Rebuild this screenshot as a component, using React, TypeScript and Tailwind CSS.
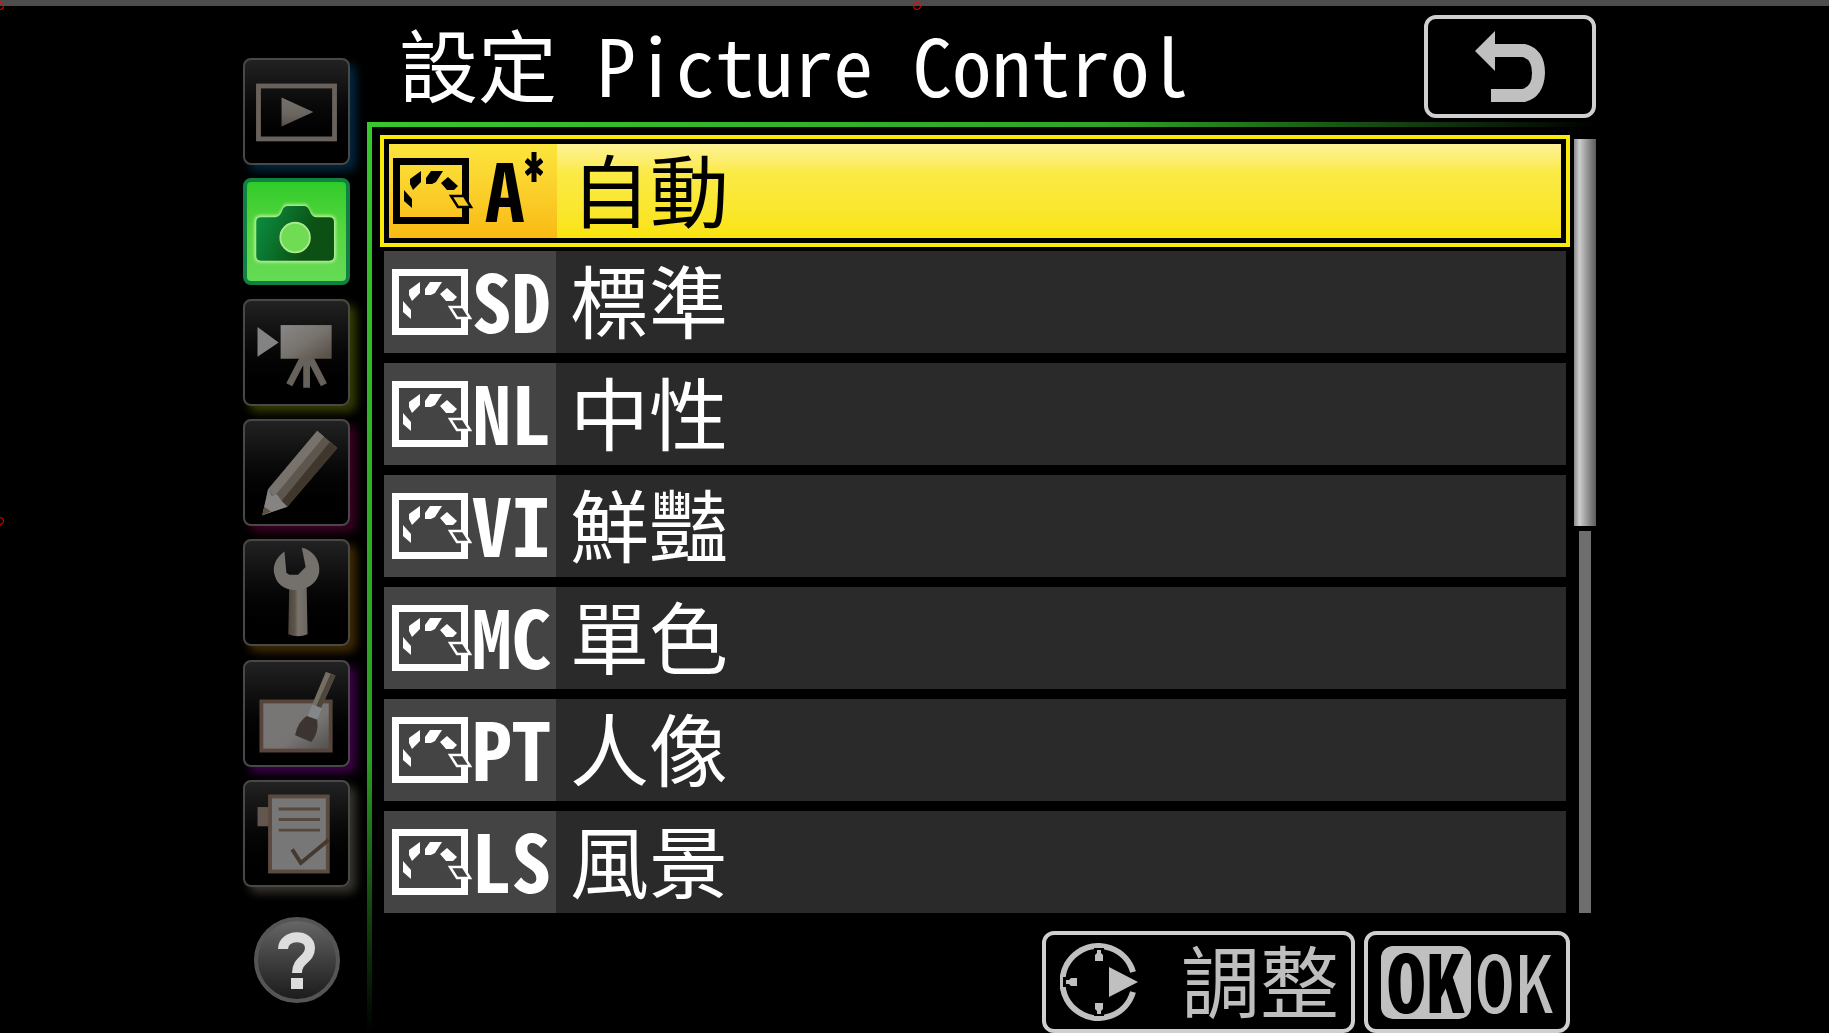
import type { ReactNode } from "react";

const ART = "absolute inset-0 h-full w-full";

function PlayIcon() {
  return (
    <svg viewBox="0 0 107 107" className={ART}>
      <defs>
        <linearGradient id="play" x1="0" y1="0" x2="0" y2="1">
          <stop offset="0" stopColor="#77716d" />
          <stop offset="0.55" stopColor="#6c6661" />
          <stop offset="1" stopColor="#594f49" />
        </linearGradient>
      </defs>
      <rect x="14" y="27" width="79" height="55" fill="none" stroke="#69625c" strokeWidth="5" />
      <path d="M38 39 L71 54 L38 69 Z" fill="url(#play)" />
    </svg>
  );
}

function CameraIcon() {
  return (
    <svg viewBox="0 0 107 107" className={ART}>
      <defs>
        <linearGradient id="cam" x1="0" y1="0" x2="1" y2="0.3">
          <stop offset="0" stopColor="#0a9344" />
          <stop offset="0.8" stopColor="#0c5013" />
        </linearGradient>
        <filter id="camGlow" x="-20%" y="-20%" width="140%" height="140%">
          <feGaussianBlur stdDeviation="2" />
        </filter>
      </defs>
      <path
        d="M15 38 H35 L42 26 H63 L70 38 H89 Q94 38 94 43 V80 Q94 85 89 85 H15 Q10 85 10 80 V43 Q10 38 15 38 Z"
        fill="#b8f29a"
        stroke="#b8f29a"
        strokeWidth="4"
        filter="url(#camGlow)"
      />
      <path
        d="M15 38 H31 Q36 37 38 31 Q40 26 44 26 H62 Q66 26 69 34 Q71 38 75 38 H89 Q94 38 94 43 V80 Q94 85 89 85 H15 Q10 85 10 80 V43 Q10 38 15 38 Z"
        fill="url(#cam)"
      />
      <circle cx="52" cy="60" r="16" fill="#6fdc53" stroke="#a9e88c" strokeWidth="2" />
    </svg>
  );
}

function MovieIcon() {
  return (
    <svg viewBox="0 0 107 107" className={ART}>
      <defs>
        <linearGradient id="movie" x1="0" y1="0" x2="1" y2="1">
          <stop offset="0" stopColor="#888" />
          <stop offset="0.5" stopColor="#77736e" />
          <stop offset="1" stopColor="#544c42" />
        </linearGradient>
      </defs>
      <path d="M13 27 L35 43 L13 58 Z" fill="#838383" />
      <path d="M61 58 L46 87 M64 58 V90 M67 58 L82 87" stroke="#66615b" strokeWidth="7" />
      <rect x="37" y="25" width="53" height="35" fill="url(#movie)" />
    </svg>
  );
}

function PencilIcon() {
  return (
    <svg viewBox="0 0 107 107" className={ART}>
      <path d="M75 10 L24 71 L18 98 L44 89 L96 28 Z" fill="#5d564e" />
      <path d="M75 10 L24 71 L30 79 L82 16 Z" fill="#77726c" />
      <path d="M88 22 L38 83 L44 89 L96 28 Z" fill="#40372c" />
      <path d="M24 71 L28 78 L33 76 L38 83 L44 89 L18 98 Z" fill="#858483" />
      <path d="M20 89 L27 94 L18 98 Z" fill="#5b4f40" />
    </svg>
  );
}

function WrenchIcon() {
  return (
    <svg viewBox="0 0 107 107" className={ART}>
      <defs>
        <linearGradient id="shaft">
          <stop offset="0" stopColor="#4d453a" />
          <stop offset="0.35" stopColor="#5d564c" />
          <stop offset="0.5" stopColor="#78736d" />
          <stop offset="1" stopColor="#6a655e" />
        </linearGradient>
      </defs>
      <path d="M46 44 H64 L65 97 Q55 101 45 97 Z" fill="url(#shaft)" />
      <path d="M41 11 C31 18 28 28 31 36 C34 47 44 51 54 51 C66 50 75 43 77 33 C79 20 70 9 59 7 L63 27 L55 35 H46 L43 33 Z" fill="#74706b" />
    </svg>
  );
}

function RetouchIcon() {
  return (
    <svg viewBox="0 0 107 107" className={ART}>
      <defs>
        <linearGradient id="canvas" x1="0" y1="0" x2="1" y2="1">
          <stop offset="0" stopColor="#767676" />
          <stop offset="0.6" stopColor="#777573" />
          <stop offset="1" stopColor="#504d4a" />
        </linearGradient>
      </defs>
      <rect x="17" y="41" width="72" height="51" fill="url(#canvas)" stroke="#57453c" strokeWidth="4" />
      <path d="M84 10 L94 14 L78 50 L69 46 Z" fill="#756e65" />
      <path d="M89 12 L94 14 L78 50 L73 48 Z" fill="#4e463a" />
      <path d="M70 44 L80 48 L75 60 L65 56 Z" fill="#83878a" />
      <path d="M64 56 L75 60 Q77 73 69 83 L52 76 Q55 62 64 56 Z" fill="#3c3431" />
    </svg>
  );
}

function RecentIcon() {
  return (
    <svg viewBox="0 0 107 107" className={ART}>
      <rect x="13" y="26" width="16" height="20" fill="#62564e" />
      <rect x="26" y="15" width="60" height="78" fill="#777" stroke="#5b4a40" strokeWidth="4" />
      <path d="M35 28 H78 M35 39 H78 M35 50 H78" stroke="#56483d" strokeWidth="3" />
      <path d="M49 70 L58 84 L87 60" fill="none" stroke="#44392f" strokeWidth="4" />
    </svg>
  );
}

type Tab = { name: string; glow: string; icon: ReactNode; active?: boolean };

const tabs: Tab[] = [
  { name: "播放選單", glow: "shadow-[6px_6px_10px_#00273f]", icon: <PlayIcon /> },
  { name: "照片拍攝選單", glow: "", icon: <CameraIcon />, active: true },
  { name: "影片拍攝選單", glow: "shadow-[6px_6px_10px_#363c00]", icon: <MovieIcon /> },
  { name: "自訂設定選單", glow: "shadow-[6px_6px_10px_#3b0022]", icon: <PencilIcon /> },
  { name: "設定選單", glow: "shadow-[6px_6px_10px_#402b00]", icon: <WrenchIcon /> },
  { name: "修飾選單", glow: "shadow-[6px_6px_10px_#3d0048]", icon: <RetouchIcon /> },
  { name: "最近的設定", glow: "shadow-[6px_6px_10px_#37342c]", icon: <RecentIcon /> },
];

const modes = [
  { code: "A", label: "自動" },
  { code: "SD", label: "標準" },
  { code: "NL", label: "中性" },
  { code: "VI", label: "鮮豔" },
  { code: "MC", label: "單色" },
  { code: "PT", label: "人像" },
  { code: "LS", label: "風景" },
];

function PictureControlIcon() {
  return (
    <svg viewBox="0 0 80 66" className="h-[66px] w-20 shrink-0" fill="currentColor">
      <path d="M76 37 V66 H0 V0 H76 V37 H69 V7 H7 V59 H69 V37 Z" fillRule="evenodd" />
      <path d="M11 32 L19 41 V50 L11 43 Z" />
      <path d="M28 13 V24 L20 32 L17 26 V21 Z" />
      <path d="M38 13 H50 L43 24 L39 26 H33 V20 Z" />
      <path d="M55 19 L65 28 L61 32 H54 L48 25 Z" />
      {/* hollow tile that overlaps the frame */}
      <path d="M69 36 H76 V52 H69 Z" />
      <path d="M58 38 H71 L78 49 H65 Z" className="fill-(--cell)" stroke="currentColor" strokeWidth="2.500" />
    </svg>
  );
}

function ModeRow({ code, label, selected }: { code: string; label: string; selected: boolean }) {
  const content = (
    <>
      <span
        className={
          selected
            ? "flex w-[168px] items-center bg-linear-to-b from-[#fce53c] to-[#f9ba12] pl-1 [--cell:#f8cb22]"
            : "flex w-[172px] items-center bg-[#444] pl-2 [--cell:#444]"
        }
      >
        <PictureControlIcon />
        {selected ? (
          <span className="flex pb-2 pl-3 font-bold">
            {code}
            <svg viewBox="0 0 18 30" className="mt-1 h-[30px] w-[18px]" stroke="currentColor" strokeWidth="5">
              <path d="M9 0 V30 M1 8 L17 22 M17 8 L1 22" />
            </svg>
          </span>
        ) : (
          <span className="pb-2 font-bold">{code}</span>
        )}
      </span>
      <span
        className={
          selected
            ? "flex flex-1 items-center bg-linear-to-b from-[#fdf294] via-[#fbea45] via-30% to-[#f9e40b] pb-2 pl-3.5"
            : "flex flex-1 items-center bg-[#2a2a2a] pb-2 pl-3.5"
        }
      >
        {label}
      </span>
    </>
  );

  if (selected) {
    return (
      <button
        type="button"
        aria-current="true"
        className="flex h-28 w-full border-4 border-[#faea0b] bg-black p-[5px] text-left text-black"
      >
        {content}
      </button>
    );
  }
  return (
    <div className="px-1">
      <button type="button" className="flex h-[102px] w-full text-left">
        {content}
      </button>
    </div>
  );
}

export default function App() {
  return (
    <div className="relative flex min-h-screen flex-col overflow-x-clip bg-black font-['Noto_Sans_CJK_TC',sans-serif] text-white [font-feature-settings:'hwid']">
      {/* Selection frame */}
      <div className="h-1.5 border-b border-[#f00] bg-[#4d4d4d]" />
      <span className="absolute top-0.5 -left-1 size-2 rounded-full border border-[#f00]" />
      <span className="absolute top-0.5 left-1/2 -ml-0.5 size-2 rounded-full border border-[#f00]" />
      <span className="absolute top-1/2 -left-1 size-2 rounded-full border border-[#f00]" />

      <div className="flex flex-1 pr-[233px] pl-[243px]">
        {/* Menu tabs */}
        <nav className="flex w-[107px] shrink-0 flex-col items-center pt-[52px]">
          <div className="flex h-[829px] flex-col justify-between">
            {tabs.map((tab) => (
              <button
                key={tab.name}
                type="button"
                aria-label={tab.name}
                className={
                  tab.active
                    ? "relative size-[107px] rounded-lg border-4 border-[#118043] bg-linear-to-b from-[#2fcb29] via-[#57d640] to-[#66da55]"
                    : `relative size-[107px] rounded-lg border-2 border-[#484848] bg-linear-to-b from-[#222] to-black ${tab.glow}`
                }
              >
                {tab.icon}
              </button>
            ))}
          </div>
          <button
            type="button"
            aria-label="說明"
            className="mt-[30px] flex size-[86px] items-center justify-center rounded-full border-4 border-[#555] bg-linear-to-b from-[#666] to-[#1c1c1c]"
          >
            <svg viewBox="0 0 37 57" className="h-[57px] w-[37px]">
              <path d="M5 17 C5 2 32 1 32 16 C32 28 19 27 19 41" fill="none" stroke="#ddd" strokeWidth="10" />
              <rect x="13" y="46" width="12" height="11" fill="#ddd" />
            </svg>
          </button>
        </nav>

        <div className="flex min-w-0 flex-1 flex-col pl-[17px]">
          <header className="flex h-[116px] items-center justify-between pt-[9px] pb-1 pl-8">
            <h1 className="pb-2 text-[79px] leading-none whitespace-pre">設定 Picture Control</h1>
            <button
              type="button"
              aria-label="返回"
              className="flex h-[103px] w-[172px] items-center justify-center rounded-xl border-4 border-[#cfcfcf]"
            >
              <svg viewBox="0 0 70 72" className="h-[72px] w-[70px]" fill="#c0c0c0">
                <path d="M0 20 L20 0 V13 H50 Q70 18 70 42 Q69 66 50 71 H16 V58 H47 Q57 56 57 42 Q57 28 47 26 H20 V40 Z" />
              </svg>
            </button>
          </header>

          <div className="h-[5px] shrink-0 bg-linear-to-r from-[#36c82c] via-[#2fa426] via-60% to-transparent" />
          <div className="flex flex-1">
            <div className="w-[5px] shrink-0 bg-linear-to-b from-[#36c82c] via-[#2a9c22] via-70% to-transparent" />
            <div className="flex min-w-0 flex-1 flex-col pt-2 pl-2">
              <div className="flex gap-1">
                <main className="flex min-w-0 flex-1 flex-col gap-2.5 text-[79px] leading-none [&>button]:-mb-1.5">
                  {modes.map((mode, i) => (
                    <ModeRow key={mode.code} code={mode.code} label={mode.label} selected={i === 0} />
                  ))}
                </main>
                {/* Scroll bar */}
                <div className="flex w-[22px] flex-col items-center gap-[5px] pt-1">
                  <div className="h-[387px] w-full bg-linear-to-r from-[#8a8a8a] via-[#cdcdcd] via-25% to-[#5c5c5c]" />
                  <div className="w-3 flex-1 bg-[#6e6e6e]" />
                </div>
              </div>

              <footer className="mt-[18px] flex justify-end gap-[9px] pr-[26px] text-[79px] leading-none text-[#bebebe]">
                <button
                  type="button"
                  className="flex h-[102px] w-[313px] items-center justify-between rounded-xl border-4 border-[#cfcfcf] pr-3 pl-3.5"
                >
                  <svg viewBox="0 0 78 78" className="size-[78px]" fill="#c0c0c0">
                    <path d="M73 29 A36 36 0 1 0 73 49" fill="none" stroke="#c0c0c0" strokeWidth="6" />
                    <path d="M49 24 L78 39 L49 54 Z" />
                    <path d="M34 5 H44 V18 H34 Z M34 60 H44 V73 H34 Z M3 34 H18 V44 H3 Z" fill="#000" />
                    <path d="M37 7 H41 V10 L43 12 V18 H35 V12 L37 10 Z M37 71 H41 V68 L43 66 V60 H35 V66 L37 68 Z M6 37 V41 H9 L11 43 H17 V35 H11 L9 37 Z" />
                  </svg>
                  <span className="pb-2">調整</span>
                </button>
                <button
                  type="button"
                  className="flex h-[102px] w-[206px] items-center gap-1 rounded-xl border-4 border-[#cfcfcf] pl-[13px]"
                >
                  <span className="flex h-[73px] w-[90px] items-center justify-center rounded-xl bg-[#c0c0c0] pb-2 font-bold text-black">
                    OK
                  </span>
                  <span className="pb-2">OK</span>
                </button>
              </footer>
            </div>
          </div>
        </div>
      </div>
    </div>
  );
}
